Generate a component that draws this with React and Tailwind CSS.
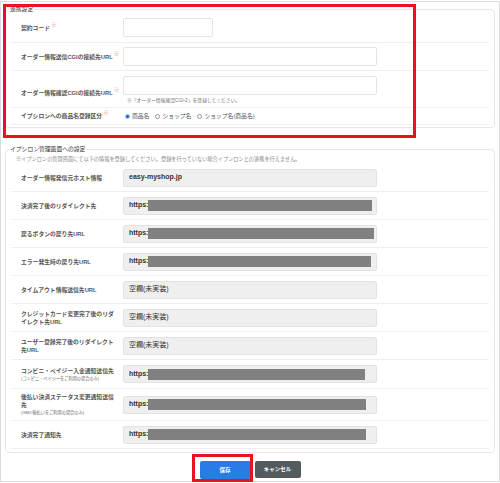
const LABEL_CLS =
  "w-[112px] shrink-0 pl-[10px] text-[5.8px] leading-[8px] font-bold text-[#555] whitespace-nowrap";

const ROW_CLS = "flex items-center border-b border-[#efefef]";

function Req() {
  return <sup className="ml-[1px] text-[5.5px] text-[#f2875f]">※</sup>;
}

function ReadField({ text, bar, plain }) {
  return (
    <div
      className={
        "w-[254px] h-[18px] rounded-[2px] border border-[#e2e2e2] bg-[#efefef] flex items-center pl-[5px] text-[7px] text-[#333] overflow-hidden " +
        (plain ? "font-normal" : "font-bold")
      }
    >
      {bar ? (
        <>
          <span>https:/</span>
          <div className={bar + " h-[11px] bg-[#808080] -ml-[2px]"} />
        </>
      ) : (
        <span>{text}</span>
      )}
    </div>
  );
}

const ROWS = [
  { h: "h-[28px]", label: "オーダー情報発信元ホスト情報", text: "easy-myshop.jp" },
  { h: "h-[28px]", label: "決済完了後のリダイレクト先", bar: "w-[224px]" },
  { h: "h-[28px]", label: "戻るボタンの戻り先URL", bar: "w-[226px]" },
  { h: "h-[28px]", label: "エラー発生時の戻り先URL", bar: "w-[223px]" },
  { h: "h-[28px]", label: "タイムアウト情報送信先URL", text: "空欄(未実装)", plain: true },
  { h: "h-[28px]", label: ["クレジットカード変更完了後のリダ", "イレクト先URL"], text: "空欄(未実装)", plain: true },
  { h: "h-[28px]", label: ["ユーザー登録完了後のリダイレクト", "先URL"], text: "空欄(未実装)", plain: true },
  {
    h: "h-[29px]",
    label: ["コンビニ・ペイジー入金通知送信先"],
    small: "(コンビニ・ペイジーをご利用の場合のみ)",
    bar: "w-[217px]",
  },
  {
    h: "h-[32px]",
    label: ["後払い決済ステータス変更通知送信", "先"],
    small: "(GMO後払いをご利用の場合のみ)",
    bar: "w-[218px]",
  },
  { h: "h-[28px]", label: "決済完了通知先", bar: "w-[218px]" },
];

function Radio({ checked, label }) {
  return (
    <span className="flex items-center mr-[6px]">
      {checked ? (
        <span className="w-[5px] h-[5px] rounded-full bg-[#1a6fe0] border border-[#9cc0f2]" />
      ) : (
        <span className="w-[5px] h-[5px] rounded-full border border-[#9a9a9a] bg-white" />
      )}
      <span className="ml-[2px]">{label}</span>
    </span>
  );
}

export default function App() {
  return (
    <div className="relative w-[500px] h-[483px] bg-white overflow-hidden font-['Liberation_Sans','Noto_Sans_CJK_JP',sans-serif]">
      <div className="mt-[1px] h-[481px] border border-[#dcdcdc] px-[4px]">
        {/* 連携設定 */}
        <fieldset className="mt-[3px] border border-[#e6e6e6] rounded-[4px] px-[5px] pb-[2px]">
          <legend className="ml-[-2px] px-[1px] text-[5.8px] leading-[8px] text-[#333]">連携設定</legend>

          <div className={ROW_CLS + " h-[30px]"}>
            <div className={LABEL_CLS}>
              契約コード
              <Req />
            </div>
            <div className="w-[90px] h-[19px] rounded-[2px] border border-[#e3e3e3] bg-white" />
          </div>

          <div className={ROW_CLS + " h-[28px]"}>
            <div className={LABEL_CLS}>
              オーダー情報送信CGIの接続先URL
              <Req />
            </div>
            <div className="w-[254px] h-[19px] rounded-[2px] border border-[#e3e3e3] bg-white" />
          </div>

          <div className={ROW_CLS + " h-[37px]"}>
            <div className={LABEL_CLS + " mt-[8px]"}>
              オーダー情報確認CGIの接続先URL
              <Req />
            </div>
            <div className="flex flex-col self-start pt-[5px]">
              <div className="w-[254px] h-[19px] rounded-[2px] border border-[#e3e3e3] bg-white" />
              <div className="mt-[2px] pl-[4px] text-[4.8px] leading-[8px] text-[#777]">
                ※「オーダー情報確認CGI-2」を登録してください。
              </div>
            </div>
          </div>

          <div className={ROW_CLS + " h-[17px]"}>
            <div className={LABEL_CLS}>
              イプシロンへの商品名登録区分
              <Req />
            </div>
            <div className="flex items-center pl-[2px] text-[5.8px] text-[#555]">
              <Radio checked label="商品名" />
              <Radio label="ショップ名" />
              <Radio label="ショップ名(商品名)" />
            </div>
          </div>
        </fieldset>

        {/* イプシロン管理画面への設定 */}
        <fieldset className="mt-[17px] border border-[#e6e6e6] rounded-[4px] px-[5px] pb-[3px]">
          <legend className="ml-[-2px] px-[1px] text-[5.8px] leading-[8px] text-[#333]">
            イプシロン管理画面への設定
          </legend>
          <div className="mt-[2px] pl-[5px] text-[5.2px] leading-[9px] text-[#888] whitespace-nowrap">
            ※イプシロンの管理画面にて以下の情報を登録してください。登録を行っていない場合イプシロンとの連携を行えません。
          </div>

          {ROWS.map((r, i) => (
            <div key={i} className={ROW_CLS + " " + r.h}>
              <div className={LABEL_CLS}>
                {Array.isArray(r.label)
                  ? r.label.map((l, j) => <div key={j}>{l}</div>)
                  : r.label}
                {r.small && (
                  <div className="text-[4.2px] leading-[7px] font-normal text-[#666]">{r.small}</div>
                )}
              </div>
              <ReadField text={r.text} bar={r.bar} plain={r.plain} />
            </div>
          ))}
        </fieldset>

        {/* buttons */}
        <div className="mt-[8px] flex justify-center gap-[4px]">
          <button className="w-[51px] h-[18px] rounded-[2px] bg-[#2b7be6] text-white text-[5.5px] font-bold flex items-center justify-center">
            保存
          </button>
          <button className="w-[46px] h-[17px] rounded-[2px] bg-[#545b5f] text-white text-[5.5px] font-bold flex items-center justify-center">
            キャンセル
          </button>
        </div>
      </div>

      {/* highlight boxes */}
      <div className="absolute left-[3px] top-[4px] w-[413px] h-[134px] border-[3px] border-[#e8131f]" />
      <div className="absolute left-[192px] top-[454px] w-[61px] h-[28px] border-[3px] border-[#e8131f]" />
    </div>
  );
}
